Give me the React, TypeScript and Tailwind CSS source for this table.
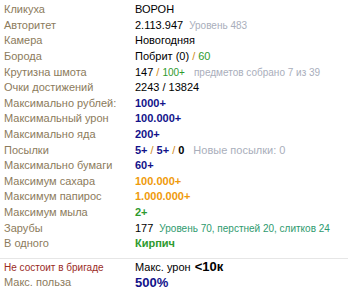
const Row = ({ label, children, labelClass = 'text-[#8c7b5c]' }: { label: string; children: React.ReactNode; labelClass?: string }) => (
  <div className="flex h-[15.6px] items-center whitespace-nowrap">
    <div className={`w-[131px] shrink-0 ${labelClass}`}>{label}</div>
    <div className="flex items-baseline">{children}</div>
  </div>
);

const Slash = ({ className = 'text-[#d08a1a]' }: { className?: string }) => <span className={`mx-[3px] ${className}`}>/</span>;

export default function App() {
  return (
    <div className="w-[348px] h-[292px] bg-white pl-[4px] pt-[2px] text-[11px] leading-[13px] text-black" style={{ fontFamily: '"Liberation Sans", Arial, sans-serif' }}>
      <Row label="Кликуха">ВОРОН</Row>
      <Row label="Авторитет">
        2.113.947<span className="ml-[6px] text-[10px] text-[#a9aebb]">Уровень 483</span>
      </Row>
      <Row label="Камера">Новогодняя</Row>
      <Row label="Борода">
        Побрит (0)<Slash /><span className="text-[#2e9a2e]">60</span>
      </Row>
      <Row label="Крутизна шмота">
        147<Slash /><span className="text-[#2e9a2e] text-[10px]">100+</span>
        <span className="ml-[9px] text-[10px] text-[#a9aebb]">предметов собрано 7 из 39</span>
      </Row>
      <Row label="Очки достижений">
        2243<Slash className="text-black" />13824
      </Row>
      <Row label="Максимально рублей:"><b className="text-[#12128a]">1000+</b></Row>
      <Row label="Максимальный урон"><b className="text-[#12128a]">100.000+</b></Row>
      <Row label="Максимально яда"><b className="text-[#12128a]">200+</b></Row>
      <Row label="Посылки">
        <b className="text-[#12128a]">5+</b><Slash /><b className="text-[#12128a]">5+</b><Slash /><b>0</b>
        <span className="ml-[9px] text-[#a9aebb]">Новые посылки: 0</span>
      </Row>
      <Row label="Максимально бумаги"><b className="text-[#12128a]">60+</b></Row>
      <Row label="Максимум сахара"><b className="text-[#ef9a0a]">100.000+</b></Row>
      <Row label="Максимум папирос"><b className="text-[#ef9a0a]">1.000.000+</b></Row>
      <Row label="Максимум мыла"><b className="text-[#2e9a2e]">2+</b></Row>
      <Row label="Зарубы">
        177<span className="ml-[6px] text-[10px] text-[#2e9a6e]">Уровень 70, перстней 20, слитков 24</span>
      </Row>
      <Row label="В одного"><b className="text-[#2e9a2e]">Кирпич</b></Row>
      <div className="-ml-[4px] mt-[6px] border-t border-[#e6e6e6] pl-[4px] pt-[1px]">
        <Row label="Не состоит в бригаде" labelClass="text-[#9a2b1e] text-[10px]">
          Макс. урон<b className="ml-[4px] text-[13px]">&lt;10к</b>
        </Row>
        <Row label="Макс. польза">
          <b className="text-[13px] text-[#12128a]">500%</b>
        </Row>
      </div>
    </div>
  );
}
